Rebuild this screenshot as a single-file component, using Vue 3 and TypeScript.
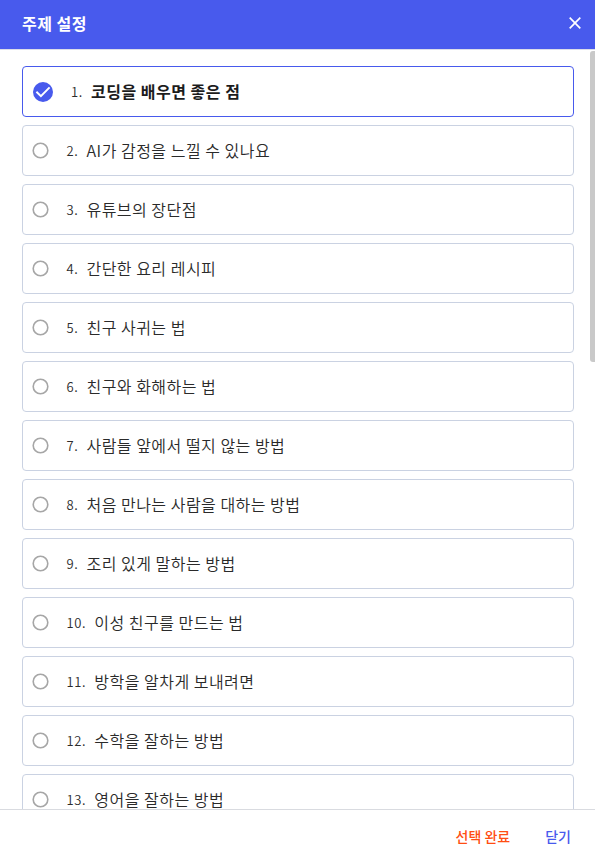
<script setup lang="ts">
import { ref } from 'vue'

const topics: string[] = [
  '코딩을 배우면 좋은 점',
  'AI가 감정을 느낄 수 있나요',
  '유튜브의 장단점',
  '간단한 요리 레시피',
  '친구 사귀는 법',
  '친구와 화해하는 법',
  '사람들 앞에서 떨지 않는 방법',
  '처음 만나는 사람을 대하는 방법',
  '조리 있게 말하는 방법',
  '이성 친구를 만드는 법',
  '방학을 알차게 보내려면',
  '수학을 잘하는 방법',
  '영어을 잘하는 방법',
]
const selected = ref<number>(0)
</script>

<template>
  <div class="dialog">
    <header class="header">
      <h1 class="title">주제 설정</h1>
      <button class="close" type="button">
        <svg width="12" height="12" viewBox="0 0 12 12">
          <path d="M0.7 0.7 L11.3 11.3 M11.3 0.7 L0.7 11.3" fill="none" stroke="#fff" stroke-width="1.7" />
        </svg>
      </button>
    </header>
    <main class="body">
      <ul class="list">
        <li
          v-for="(topic, i) in topics"
          :key="i"
          class="item"
          :class="{ active: i === selected }"
          @click="selected = i"
        >
          <svg v-if="i === selected" class="mark" width="20" height="20" viewBox="0 0 20 20">
            <circle cx="10" cy="10" r="10" fill="#485aed" />
            <path d="M3.4 9.8 L7.9 14.1 L16.6 5.4" fill="none" stroke="#fff" stroke-width="2" />
          </svg>
          <svg v-else class="mark" width="17" height="17" viewBox="0 0 17 17">
            <circle cx="8.5" cy="8.5" r="7.3" fill="none" stroke="#a6a6a6" stroke-width="1.6" />
          </svg>
          <span class="num">{{ i + 1 }}.</span>
          <span class="text">{{ topic }}</span>
        </li>
      </ul>
      <div class="track"><div class="thumb"></div></div>
    </main>
    <footer class="footer">
      <button class="btn confirm" type="button">선택 완료</button>
      <button class="btn dismiss" type="button">닫기</button>
    </footer>
  </div>
</template>

<style>
body {
  background: #fff;
}
</style>

<style scoped>
.dialog {
  display: flex;
  flex-direction: column;
  height: 859px;
  overflow: hidden;
  background: #fff;
  color: #1c1c1c;
  font-family: "Noto Sans CJK KR", sans-serif;
}
.header {
  box-sizing: border-box;
  flex: none;
  display: flex;
  align-items: center;
  justify-content: space-between;
  height: 50px;
  padding: 0 14px 3px 22px;
  background: #485aed;
  border-bottom: 1px solid #dbdde9;
}
.title {
  margin: 0;
  color: #fff;
  font-size: 16px;
  font-weight: 700;
  line-height: 24px;
  letter-spacing: 0.5px;
}
button {
  margin: 0;
  padding: 0;
  border: 0;
  background: none;
  font-family: inherit;
  cursor: pointer;
}
.close {
  display: flex;
}
.body {
  flex: 1;
  min-height: 0;
  display: flex;
  overflow: hidden;
}
.list {
  flex: 1;
  display: flex;
  flex-direction: column;
  gap: 8px;
  margin: 0;
  padding: 16px 16px 0 22px;
  list-style: none;
}
.item {
  box-sizing: border-box;
  flex: none;
  display: flex;
  align-items: center;
  height: 51px;
  padding-left: 9px;
  border: 1px solid #cad2e2;
  border-radius: 4px;
  cursor: pointer;
}
.item.active {
  padding-left: 10px;
  border-color: #485aed;
}
.mark {
  flex: none;
  display: block;
  margin-right: 17.4px;
}
.active .mark {
  margin-right: 18px;
}
.num {
  margin-right: 8.1px;
  color: #2c2c2c;
  font-size: 13px;
  font-weight: 350;
  line-height: 24px;
  letter-spacing: 0.65px;
}
.text {
  padding-bottom: 2px;
  color: #2a2a2a;
  font-size: 16px;
  font-weight: 350;
  line-height: 24px;
  letter-spacing: 0.5px;
}
.active .text {
  color: #1c1c1c;
  font-weight: 700;
}
.track {
  flex: none;
  width: 5px;
  padding-top: 1px;
}
.thumb {
  height: 311px;
  border-radius: 3px 0 0 3px;
  background: #c9c9c9;
}
.footer {
  box-sizing: border-box;
  flex: none;
  display: flex;
  align-items: center;
  justify-content: flex-end;
  gap: 35px;
  height: 50px;
  padding: 2px 24px 0 0;
  border-top: 1px solid #d9dbe0;
}
.btn {
  font-size: 14px;
  font-weight: 500;
  line-height: 20px;
}
.confirm {
  color: #ff4e12;
}
.dismiss {
  color: #485aed;
}
</style>
